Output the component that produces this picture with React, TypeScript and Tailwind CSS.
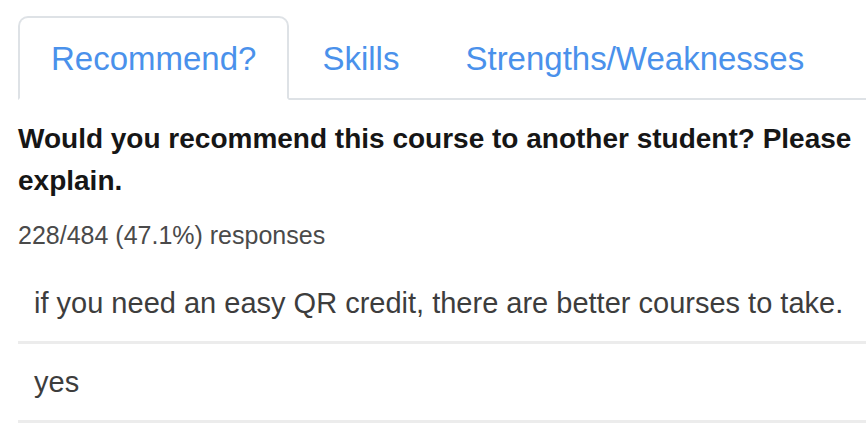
const tabs = ["Recommend?", "Skills", "Strengths/Weaknesses"];

const responses = [
  "if you need an easy QR credit, there are better courses to take.",
  "yes",
];

const App = () => {
  return (
    <div className="min-h-[440px] bg-white pl-[18px] pt-4 font-['Liberation_Sans',Arial,sans-serif]">
      <ul className="flex border-b-2 border-[#dee2e6]">
        {tabs.map((tab, index) => (
          <li key={tab} className="-mb-[2px]">
            <a
              className={`block px-[31px] pt-[17px] pb-[15px] text-[33px] leading-[48px] text-[#4a91eb] border-2 rounded-t-[10px] ${
                index === 0 ? "border-[#dee2e6] border-b-white bg-white" : "border-transparent"
              }`}
            >
              {tab}
            </a>
          </li>
        ))}
      </ul>

      <div className="mt-[18px] text-[28px] leading-[42px] font-bold text-[#161616]">
        Would you recommend this course to another student? Please explain.
      </div>
      <div className="mt-[15px] text-[25px] leading-[36px] text-[#4a4a4a]">
        228/484 (47.1%) responses
      </div>

      <div className="mt-3 flex flex-col">
        {responses.map((text) => (
          <div
            key={text}
            className="border-b-[3px] border-[#ececec] px-4 py-[17px] text-[29px] leading-[42px] text-[#3d3d3d]"
          >
            {text}
          </div>
        ))}
      </div>
    </div>
  );
};

export default App;
